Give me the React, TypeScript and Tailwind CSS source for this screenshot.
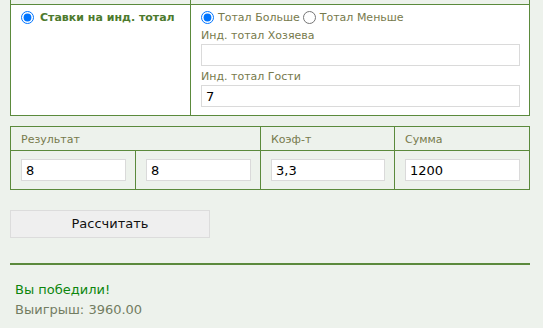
import React from "react";

const B = "border-[#5b8a3c]";

export default function App() {
  return (
    <div
      className="w-[543px] h-[328px] overflow-hidden bg-[#edf2ec] text-[#777a4c]"
      style={{ fontFamily: '"DejaVu Sans", Verdana, sans-serif' }}
    >
      {/* Table 1 */}
      <div className={`ml-[10px] w-[520px] border-x border-b ${B}`}>
        <div className="flex h-[4px]">
          <div className={`w-[180px] border-r ${B}`} />
          <div className="flex-1" />
        </div>
        <div className={`flex border-t ${B} bg-white`}>
          <div className={`w-[180px] border-r ${B} pl-[10px] pt-[2px]`}>
            <label className="flex h-[20px] items-center gap-[6px]">
              <input type="radio" name="bet" defaultChecked className="w-[13px] h-[13px]" />
              <span className="pt-[3px] text-[11px] font-bold text-[#4d7a2d]">Ставки на инд. тотал</span>
            </label>
          </div>
          <div className="flex-1 pl-[10px] pr-[9px] pt-[2px] pb-[8px] text-[11px]">
            <div className="flex h-[20px] items-center">
              <input type="radio" name="tot" defaultChecked className="w-[13px] h-[13px]" />
              <span className="ml-[4px] pt-[3px]">Тотал Больше</span>
              <input type="radio" name="tot" className="ml-[3px] w-[13px] h-[13px]" />
              <span className="ml-[4px] pt-[3px]">Тотал Меньше</span>
            </div>
            <div className="h-[17px] leading-[17px]">Инд. тотал Хозяева</div>
            <input
              className="block w-full h-[22px] border border-[#dadada] bg-white px-[4px] text-[13px] text-black outline-none"
              defaultValue=""
            />
            <div className="mt-[2px] h-[17px] leading-[17px]">Инд. тотал Гости</div>
            <input
              className="block w-full h-[22px] border border-[#dadada] bg-white px-[4px] text-[13px] text-black outline-none"
              defaultValue="7"
            />
          </div>
        </div>
      </div>

      {/* Table 2 */}
      <div className={`mt-[10px] ml-[10px] w-[520px] border ${B} text-[11px]`}>
        <div className={`flex h-[24px] border-b ${B}`}>
          <div className={`w-[250px] border-r ${B} pl-[10px] pt-[3px] flex items-center`}>Результат</div>
          <div className={`w-[134px] border-r ${B} pl-[10px] pt-[3px] flex items-center`}>Коэф-т</div>
          <div className="flex-1 pl-[10px] pt-[3px] flex items-center">Сумма</div>
        </div>
        <div className="flex h-[38px]">
          {[
            { w: "w-[125px]", v: "8", br: true },
            { w: "w-[125px]", v: "8", br: true },
            { w: "w-[134px]", v: "3,3", br: true },
            { w: "flex-1", v: "1200", br: false },
          ].map((c, i) => (
            <div
              key={i}
              className={`${c.w} ${c.br ? `border-r ${B}` : ""} pl-[10px] pr-[9px] pt-[8px]`}
            >
              <input
                className="block w-full h-[22px] border border-[#dadada] bg-white px-[4px] text-[13px] text-black outline-none"
                defaultValue={c.v}
              />
            </div>
          ))}
        </div>
      </div>

      <button className="mt-[20px] ml-[10px] block w-[200px] h-[28px] border border-[#dcdcdc] bg-[#efefef] text-[13px] text-[#111]">
        Рассчитать
      </button>

      <div className="mt-[25px] ml-[10px] w-[520px] h-[2px] bg-[#5b8a3c]" />

      <div className="mt-[15px] pl-[15px] text-[13px] leading-[20px]">
        <div className="text-[#0c860c]">Вы победили!</div>
        <div className="text-[#737d62]">Выигрыш: 3960.00</div>
      </div>
    </div>
  );
}
